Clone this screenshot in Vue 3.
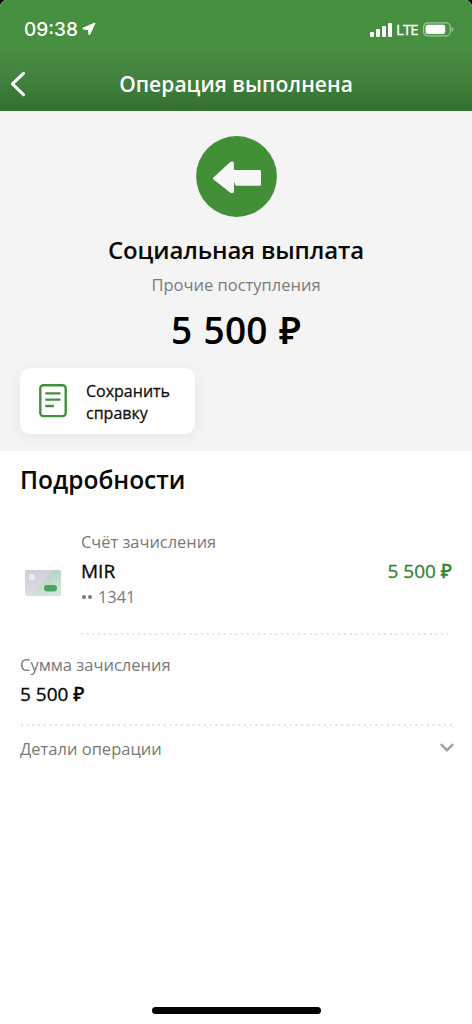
<script setup>
const bars = [5, 8, 11, 13.5]
</script>

<template>
  <div class="screen">
    <header class="top">
      <div class="status">
        <span class="time">09:38</span>
        <svg class="loc" width="14" height="14" viewBox="0 0 14 14"><path d="M13 1 7.700 12.600 6.900 12.600 6.600 7.500 1 7 1 6.200Z" fill="#fff" stroke="#fff" stroke-width="1" stroke-linejoin="round" /></svg>
        <div class="signal"><i v-for="h in bars" :key="h" :style="{ height: h + 'px' }"></i></div>
        <span class="lte">LTE</span>
        <svg class="battery" width="31" height="15" viewBox="0 0 31 15">
          <rect x=".6" y=".9" width="26.600" height="13" rx="4" fill="none" stroke="#fff" stroke-opacity=".5" stroke-width="1.2" />
          <rect x="2.500" y="2.700" width="19.800" height="9.400" rx="2.300" fill="#fff" />
          <path d="M28.600 5v4.800c1-.4 1.700-1.300 1.700-2.400S29.600 5.400 28.600 5Z" fill="#fff" fill-opacity=".5" />
        </svg>
      </div>
      <div class="nav">
        <svg class="back" width="16" height="26" viewBox="0 0 16 26"><path d="M13.500 2.300 2.400 12.900l11.100 10.700" fill="none" stroke="#fff" stroke-width="3" stroke-linecap="round" stroke-linejoin="round" /></svg>
        <h1>Операция выполнена</h1>
      </div>
    </header>

    <section class="summary">
      <svg class="badge" width="81" height="81" viewBox="0 0 81 81">
        <circle cx="40.500" cy="40.500" r="40.400" fill="#428f38" />
        <path d="M17.600 41.200 33.800 26.400c1.800-1.500 3.900-1 4.100.9v5.500c.1.800.7 1.200 1.600 1.200h23.800c1.200 0 1.700.5 1.700 1.500v12.700c0 1-.5 1.500-1.700 1.500H40.400c-1.200-.1-1.500-1.100-1.500-2.300 0-1-.8-1.200-.9.200v8c-.2 1.700-2.300 2.300-4 1L17.600 43.600c-.9-.8-.9-1.600 0-2.400Z" fill="#f6f7f6" />
      </svg>
      <h2>Социальная выплата</h2>
      <p class="category">Прочие поступления</p>
      <p class="amount">5 500 ₽</p>
      <button class="save">
        <svg width="28" height="34" viewBox="0 0 28 34" fill="none" stroke="#43903c">
          <rect x="1.300" y="1.300" width="25.400" height="30.800" rx="3" stroke-width="2.400" />
          <path d="M6.300 9.400h15.200M6.300 15.700h15.200M6.300 22h8.600" stroke-width="2.300" />
        </svg>
        <span>Сохранить<br />справку</span>
      </button>
    </section>

    <main>
      <h3>Подробности</h3>
      <div class="account">
        <svg class="card" width="36" height="26" viewBox="0 0 36 26">
          <defs>
            <linearGradient id="cardFill" x1="0" y1="0" x2="1" y2=".7">
              <stop offset="0" stop-color="#cccbd9" /><stop offset=".52" stop-color="#cfd0d8" /><stop offset=".6" stop-color="#b9d5c3" /><stop offset="1" stop-color="#c9e3d1" />
            </linearGradient>
            <linearGradient id="cardShade" x1="0" y1="0" x2="0" y2="1">
              <stop offset="0" stop-color="#fff" stop-opacity="0" /><stop offset="1" stop-color="#fff" stop-opacity=".3" />
            </linearGradient>
          </defs>
          <rect width="36" height="25.500" rx="2.800" fill="#d0d0da" />
          <path d="M28 0h5.200A2.800 2.800 0 0 1 36 2.800v19.900a2.800 2.800 0 0 1-2.800 2.800H6Z" fill="#b5d3c0" />
          <rect width="36" height="25.500" rx="2.800" fill="url(#cardFill)" opacity=".6" />
          <rect width="36" height="25.500" rx="2.800" fill="url(#cardShade)" />
          <circle cx="7" cy="7.200" r="3.200" fill="#e9e9f5" />
          <rect x="19" y="15" width="13" height="6.400" rx="3.200" fill="#4da160" />
        </svg>
        <div class="info">
          <p class="label">Счёт зачисления</p>
          <div class="row"><span>MIR</span><span class="income">5 500 ₽</span></div>
          <p class="number"><i></i><i></i><span>1341</span></p>
        </div>
      </div>
      <div class="dots inset"></div>
      <p class="label sum">Сумма зачисления</p>
      <p class="value">5 500 ₽</p>
      <div class="dots"></div>
      <div class="details">
        <span>Детали операции</span>
        <svg width="14" height="10" viewBox="0 0 14 10"><path d="m1.500 1.800 5.500 5.400 5.500-5.400" fill="none" stroke="#a3a3a3" stroke-width="2.500" stroke-linecap="round" /></svg>
      </div>
    </main>
    <div class="home"></div>
  </div>
</template>

<style>
body { background: #000; }
</style>

<style scoped>
* { box-sizing: border-box; margin: 0; padding: 0; }
.screen { width: 472px; height: 1024px; overflow: hidden; display: flex; flex-direction: column; border-radius: 7px 7px 0 0; background: #fefefe; color: #080808; font-family: "Open Sans", "Noto Sans", sans-serif; }
svg { display: block; flex: none; }
.top { height: 111px; flex: none; background: linear-gradient(#45903e 0, #478f41 45%, #448440 65%, #34702f 100%); color: #fff; }
.status { height: 57px; display: flex; align-items: center; padding: 2px 18px 0 24px; }
.time { font: 500 19px/24px Inter, sans-serif; width: 53px; white-space: nowrap; }
.loc { margin: -1px 0 0 5px; }
.signal { display: flex; align-items: flex-end; gap: 2px; height: 14px; margin-left: auto; }
.signal i { width: 4px; background: #fff; border-radius: 1px; }
.lte { font: 400 15px/20px "Open Sans", sans-serif; width: 22px; margin: -1px 5px 0 4px; white-space: nowrap; letter-spacing: -.9px; -webkit-text-stroke: .3px; }
.nav { height: 54px; display: flex; align-items: center; padding: 0 10px; }
h1 { flex: 1; text-align: center; margin-right: 16px; font-size: 21px; line-height: 28px; font-weight: 600; padding-bottom: 1px; letter-spacing: .05px; }
.summary { height: 340px; flex: none; background: #f4f4f4; display: flex; flex-direction: column; align-items: center; padding-top: 25px; }
h2 { font-size: 24px; line-height: 34px; font-weight: 600; margin-top: 16px; letter-spacing: -.12px; }
.category { font-size: 16.500px; line-height: 24px; margin-top: 6px; color: #7b7b7b; }
.amount { font-size: 37px; line-height: 48px; font-weight: 600; margin-top: 9px; letter-spacing: .2px; word-spacing: 1.500px; color: #000; }
.save { align-self: flex-start; width: 175px; height: 66px; margin: 14px 0 0 20px; padding-left: 19px; border: 0; border-radius: 10px; background: #fff; box-shadow: 0 3px 16px rgba(0,0,0,.06); display: flex; align-items: center; gap: 19px; font: 400 16px/22px "Open Sans", sans-serif; color: #111; text-align: left; -webkit-text-stroke: .3px; }
.save span { padding-top: 2px; }
main { padding: 0 20px; display: flex; flex-direction: column; }
h3 { font-size: 24.500px; line-height: 34px; font-weight: 600; margin-top: 12px; }
.label { font-size: 16.400px; line-height: 24px; color: #797979; }
.account { display: flex; margin-top: 33px; padding-left: 5px; }
.card { margin: 40px 20px 0 0; }
.info { flex: 1; }
.row { display: flex; justify-content: space-between; font-size: 19px; line-height: 26px; margin-top: 4px; font-weight: 500; -webkit-text-stroke: .3px; }
.number { display: flex; align-items: center; margin-top: 1px; font-size: 16.400px; line-height: 24px; color: #797979; }
.income { color: #398333; }
.number i { width: 4px; height: 4px; border-radius: 50%; background: #797979; margin: 0 1px; }
.number span { margin-left: 5px; }
.dots { height: 2px; width: 432px; background: radial-gradient(circle, #e3e3e3 0 .8px, transparent 1.200px) -1px 0 / 5.730px 2px repeat-x; }
.inset { width: 368px; margin: 24px 0 0 60px; }
.sum { margin-top: 18px; font-size: 16.500px; }
.value { font-size: 19px; line-height: 26px; margin-top: 4px; font-weight: 500; -webkit-text-stroke: .3px; }
.value + .dots { margin-top: 17px; }
.details { display: flex; align-items: center; justify-content: space-between; margin: 11px -2px 0 0; font-size: 16.500px; line-height: 24px; color: #797979; }
.details svg { margin-top: -2px; }
.home { width: 169px; height: 7px; margin: auto auto 10px; border-radius: 4px; background: #000; flex: none; }
</style>
